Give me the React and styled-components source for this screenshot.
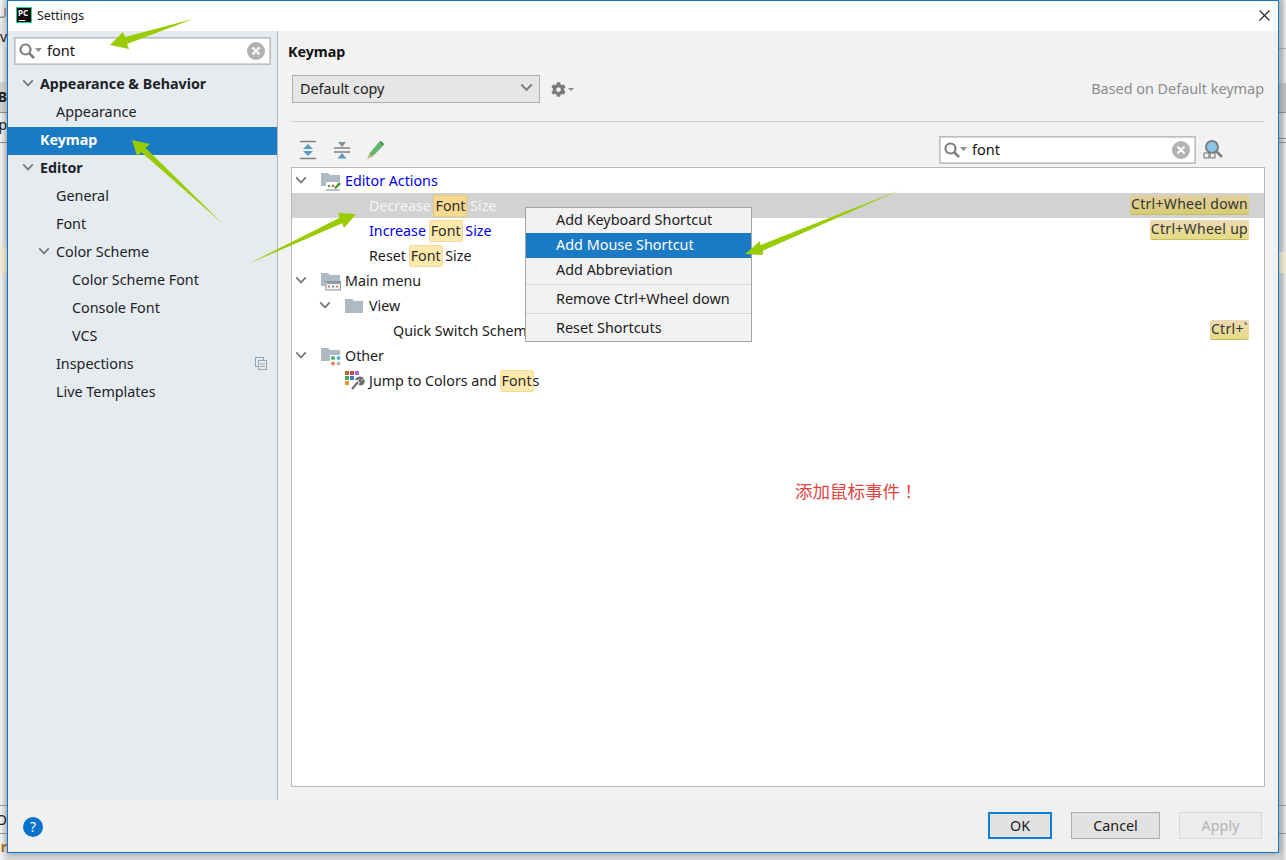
import React from 'react';
import styled, { createGlobalStyle, css } from 'styled-components';
import { FaCog } from 'react-icons/fa';

const FONT = '"Noto Sans", "Open Sans", sans-serif';

const GlobalStyle = createGlobalStyle`
  html, body {
    margin: 0;
    padding: 0;
    height: 100%;
    overflow: hidden;
    background: #e4e4e4;
  }
  * { box-sizing: border-box; }
`;

const Page = styled.div`
  position: relative;
  width: 1286px;
  height: 860px;
  padding-left: 7px;
  font-family: ${FONT};
  font-size: 14px;
  color: #1c1c1c;
  overflow: hidden;
  background: linear-gradient(to right, #f4f4f4 0, #d8d8d8 7px, #d8d8d8 1279px, #c8c8c8 1282px, #ececec 1286px);
`;

// things of the window behind the dialog, only their edges are visible
const BackBand = styled.div`
  position: absolute;
  left: ${p => (p.$right ? '1278px' : '0')};
  width: 8px;
  top: ${p => p.$top}px;
  height: ${p => p.$h}px;
  background: ${p => p.$bg};
`;

const BackText = styled.span`
  position: absolute;
  left: 0;
  width: 7px;
  overflow: hidden;
  top: ${p => p.$top}px;
  font-size: 14px;
  line-height: 18px;
  color: ${p => p.$color || '#222'};
  font-weight: ${p => (p.$bold ? 700 : 400)};
  direction: rtl;
`;

const Dialog = styled.div`
  position: relative;
  width: 1272px;
  height: 853px;
  display: flex;
  flex-direction: column;
  background: #f2f2f2;
  border: 1px solid #1674c4;
  box-shadow: 0 0 7px rgba(0, 0, 0, 0.35);
`;

const TitleBar = styled.div`
  height: 30px;
  flex: none;
  display: flex;
  align-items: center;
  padding: 0 0 2px 8px;
  background: #fff;
  font-size: 12.4px;
`;

const AppBadge = styled.div`
  width: 16px;
  height: 16px;
  margin-right: 5px;
  background: #0b0b0b;
  border: 1px solid #19d68c;
  color: #fff;
  font-size: 8px;
  font-weight: 700;
  line-height: 10px;
  padding-left: 1px;
  position: relative;
  &::after {
    content: '';
    position: absolute;
    left: 2px;
    bottom: 1px;
    width: 6px;
    height: 1px;
    background: #fff;
  }
`;

const CloseButton = styled.svg`
  width: 11px;
  height: 11px;
  margin-left: auto;
  margin-right: 8px;
`;

const Body = styled.div`
  flex: 1;
  min-height: 0;
  display: flex;
`;

const Sidebar = styled.div`
  width: 270px;
  flex: none;
  background: #e6ebf0;
  border-right: 1px solid #b4b4b4;
  padding-top: 6px;
`;

const SearchBox = styled.div`
  width: ${p => p.$w}px;
  height: 28px;
  flex: none;
  display: flex;
  align-items: center;
  background: #fff;
  border: 1px solid #bdbdbd;
  outline: 1px solid #d4d4d4;
  outline-offset: -2px;
  padding: 0 5px 1px 3px;
  margin-left: ${p => p.$ml || 0}px;
  font-size: 14.5px;
  color: #111;
`;

const SearchText = styled.span`
  margin-left: 4px;
  margin-top: -2px;
  flex: 1;
`;

const NavList = styled.div`
  margin-top: 6px;
`;

const NavRow = styled.div`
  height: 28px;
  display: flex;
  align-items: center;
  padding: 0 0 4px ${p => 8 + p.$depth * 16}px;
  font-size: ${p => (p.$bold ? 14.25 : 14.35)}px;
  font-weight: ${p => (p.$bold ? 700 : 400)};
  color: #1c2228;
  ${p => p.$selected && css`
    background: #1a7ac4;
    color: #fff;
  `}
`;

const ChevronSlot = styled.span`
  width: ${p => p.$w || 24}px;
  flex: none;
  display: flex;
  justify-content: center;
  align-items: center;
`;

const NavNote = styled.svg`
  width: 12px;
  height: 13px;
  margin-left: auto;
  margin-right: 10px;
`;

const Main = styled.div`
  flex: 1;
  min-width: 0;
  display: flex;
  flex-direction: column;
  padding: 10px 13px 13px;
`;

const Heading = styled.div`
  height: 22px;
  line-height: 22px;
  font-size: 14.25px;
  font-weight: 700;
  margin-left: -3px;
  color: #111;
`;

const SchemeRow = styled.div`
  margin-top: 12px;
  height: 28px;
  display: flex;
  align-items: center;
  padding-left: 1px;
`;

const SchemeSelect = styled.div`
  width: 248px;
  height: 28px;
  display: flex;
  align-items: center;
  justify-content: space-between;
  padding: 0 6px 2px 7px;
  background: #e6e6e6;
  border: 1px solid #adadad;
  font-size: 14.35px;
`;

const GearButton = styled.div`
  margin-left: 11px;
  display: flex;
  align-items: center;
  gap: 2px;
  color: #7a7a7a;
`;

const Caret = styled.span`
  width: 0;
  height: 0;
  border-left: 3px solid transparent;
  border-right: 3px solid transparent;
  border-top: 3px solid #8a8a8a;
`;

const BasedOn = styled.span`
  margin-left: auto;
  margin-right: 1px;
  padding-bottom: 2px;
  color: #8c8c8c;
  font-size: 14.4px;
`;

const Separator = styled.div`
  height: 1px;
  margin-top: 18px;
  background: #cfcfcf;
`;

const Toolbar = styled.div`
  margin-top: 14px;
  height: 28px;
  display: flex;
  align-items: center;
  gap: 10px;
  padding-left: 5px;
`;

const ToolIcon = styled.svg`
  width: 24px;
  height: 24px;
  flex: none;
  margin-left: ${p => p.$ml || 0}px;
`;

const ToolSearch = styled.div`
  margin-left: auto;
  margin-right: 69px;
  display: flex;
  align-items: center;
  position: relative;
`;

const Finder = styled.svg`
  position: absolute;
  left: 263px;
  top: 3px;
  width: 22px;
  height: 22px;
`;

const TreeBox = styled.div`
  margin-top: 3px;
  flex: 1;
  min-height: 0;
  background: #fff;
  border: 1px solid #b8b8b8;
`;

const TreeRow = styled.div`
  height: 25px;
  display: flex;
  align-items: center;
  padding-left: ${p => p.$depth * 24}px;
  font-size: 14.25px;
  white-space: nowrap;
  color: ${p => p.$color || '#1c1c1c'};
  background: ${p => (p.$active ? '#d2d2d2' : 'transparent')};
`;

const TreeChevron = styled.span`
  width: 29px;
  flex: none;
  display: flex;
  justify-content: center;
  padding-right: 11px;
`;

const TreeIcon = styled.span`
  width: 24px;
  height: 20px;
  flex: none;
  display: flex;
  align-items: center;
`;

const Match = styled.span`
  background: ${p => (p.$active ? '#f6d98f' : '#ffe9ad')};
  border: 1px solid ${p => (p.$active ? '#e8c878' : '#f2dc9e')};
  border-radius: 2px;
  color: #2c2c2c;
  line-height: 19px;
  padding: 0 1px 1px;
  margin: 0 -1px;
`;

const Shortcut = styled.span`
  margin-left: auto;
  margin-right: 15px;
  margin-top: -2px;
  height: 20px;
  line-height: 18px;
  padding: 0 1px;
  font-size: 14px;
  letter-spacing: 0.3px;
  color: #333;
  border-radius: 2px;
  border-bottom: 1px solid #c6bd60;
  background: linear-gradient(to bottom, ${p => (p.$active ? '#e2cfa2, #d6cd72' : '#eed9b4, #e4dc84')});
`;

const ContextMenu = styled.div`
  position: absolute;
  left: 517px;
  top: 206px;
  width: 227px;
  height: 135px;
  background: #f2f2f2;
  border: 1px solid #a3a3a3;
  font-size: 14.4px;
`;

const MenuItem = styled.div`
  height: 25px;
  line-height: 24px;
  padding-left: 30px;
  ${p => p.$selected && css`
    background: #1a7ac4;
    color: #fff;
  `}
`;

const MenuDivider = styled.div`
  height: 1px;
  margin: 1px 0 2px;
  background: #d4d4d4;
`;

const Footer = styled.div`
  height: 52px;
  flex: none;
  display: flex;
  align-items: flex-start;
  padding: 12px 16px 0 15px;
  background: #f0f0f0;
`;

const HelpButton = styled.div`
  width: 20px;
  height: 20px;
  margin-top: 5px;
  border-radius: 50%;
  background: #0a72cc;
  color: #fff;
  font-size: 14px;
  line-height: 20px;
  text-align: center;
  margin-right: auto;
`;

const Button = styled.div`
  width: ${p => p.$w}px;
  height: 27px;
  margin-left: ${p => p.$ml}px;
  display: flex;
  align-items: center;
  justify-content: center;
  font-size: 14.35px;
  background: #e2e2e2;
  border: 1px solid #adadad;
  ${p => p.$primary && css`
    border: 2px solid #0a7fdb;
  `}
  ${p => p.$disabled && css`
    background: #ececec;
    border-color: #d8d8d8;
    color: #b4b4b4;
  `}
`;

const Annotation = styled.span`
  position: absolute;
  left: 795px;
  top: 478px;
  font-family: "Noto Sans CJK TC", "Noto Sans CJK SC", sans-serif;
  font-size: 17.5px;
  line-height: 26px;
  color: #e2453f;
  white-space: nowrap;
`;

const ArrowLayer = styled.svg`
  position: absolute;
  left: 0;
  top: 0;
  width: 1286px;
  height: 860px;
  pointer-events: none;
`;

const Chevron = ({ size = 12 }) => (
  <svg width={size} height={size * 0.7} viewBox="0 0 12 8">
    <path d="M1.2 1.2 L6 6.2 L10.8 1.2" fill="none" stroke="#767b80" strokeWidth="1.8" />
  </svg>
);

const SearchGlass = () => (
  <svg width="25" height="18" viewBox="0 0 25 18">
    <circle cx="7.5" cy="7.5" r="5" fill="none" stroke="#7f7f7f" strokeWidth="2.2" />
    <path d="M11 11 L16 16" stroke="#7f7f7f" strokeWidth="2.6" />
    <path d="M17 6 H24 L20.5 10 Z" fill="#8f8f8f" />
  </svg>
);

const ClearIcon = () => (
  <svg width="18" height="18" viewBox="0 0 18 18">
    <circle cx="9" cy="9" r="9" fill="#b2b2b2" />
    <path d="M5.5 5.5 L12.5 12.5 M12.5 5.5 L5.5 12.5" stroke="#fff" strokeWidth="2.2" />
  </svg>
);

const Search = ({ w, ml }) => (
  <SearchBox $w={w} $ml={ml}>
    <SearchGlass />
    <SearchText>font</SearchText>
    <ClearIcon />
  </SearchBox>
);

const Folder = ({ children, small }) => (
  <svg width="20" height="20" viewBox="0 0 20 20">
    <path d={small ? 'M0 3 H7 L9 5 H18 V17 H0 Z' : 'M0 2 H7 L9 4 H19 V15 H0 Z'} fill="#aebbc4" />
    {children}
  </svg>
);

const ActionsDecor = () => (
  <>
    <path d="M5 11 H20 V20 H5 Z" fill="#fff" />
    <path d="M13 17 L18 11 L20 13 L15 18 Z" fill="#4a9a3c" />
    <circle cx="8" cy="15" r="1.3" fill="#4cae50" />
    <circle cx="12" cy="15" r="1.3" fill="#e0603c" />
    <path d="M5 19 H19" stroke="#7f8a90" strokeWidth="1" />
  </>
);

const MenuDecor = () => (
  <>
    <rect x="5" y="10.5" width="14.5" height="8.5" fill="#f4f4f4" stroke="#8a959c" />
    <path d="M6 11 H19 V13 H6 Z" fill="#8fa0aa" />
    <circle cx="8" cy="15.6" r="1.1" fill="#e0704c" />
    <circle cx="12" cy="15.6" r="1.1" fill="#4a90c8" />
    <circle cx="16" cy="15.6" r="1.1" fill="#e0704c" />
  </>
);

const OtherDecor = () => (
  <>
    <rect x="9" y="9" width="11" height="11" fill="#fff" />
    <circle cx="12" cy="12" r="2" fill="#4cae70" />
    <circle cx="17.5" cy="12" r="2" fill="#4ab8e0" />
    <circle cx="12" cy="17.5" r="2" fill="#e8805c" />
    <circle cx="17.5" cy="17.5" r="2" fill="#b4bcc2" />
  </>
);

const ColorsIcon = () => (
  <svg width="20" height="20" viewBox="0 0 20 20">
    <rect x="0" y="0" width="4" height="4" fill="#b8683c" />
    <rect x="5" y="0" width="4" height="4" fill="#d0483c" />
    <rect x="10" y="0" width="4" height="4" fill="#b868c8" />
    <rect x="0" y="5" width="4" height="4" fill="#4caa50" />
    <rect x="5" y="5" width="4" height="4" fill="#3c7cc8" />
    <rect x="0" y="10" width="4" height="4" fill="#d8a028" />
    <path d="M7 18 L13 11 M11 9 C12 7 15 6 17 7 L14.5 9.5 L16 11.5 L18.5 9.5 C19 12 17 14 14 13" fill="none" stroke="#6a6f73" strokeWidth="2.2" />
  </svg>
);

const ExpandIcon = () => (
  <ToolIcon viewBox="0 0 24 24">
    <path d="M4 3.5 H20 M4 20.5 H20" stroke="#808080" strokeWidth="1.6" />
    <path d="M12 6 L17 11 H7 Z M12 18 L17 13 H7 Z" fill="#5a9ac8" />
  </ToolIcon>
);

const CollapseIcon = () => (
  <ToolIcon viewBox="0 0 24 24">
    <path d="M4 10 H20 M4 14 H20" stroke="#808080" strokeWidth="1.6" />
    <path d="M12 9 L8 4 H16 Z" fill="#7f8f9a" />
    <path d="M12 15 L16.5 20.5 H7.5 Z" fill="#5a9ac8" />
  </ToolIcon>
);

const PencilIcon = () => (
  <ToolIcon viewBox="0 0 24 24" $ml={-1}>
    <path d="M6 16 L16 4 L20 8 L9 19 Z" fill="#62b86a" />
    <path d="M16 4 L20 8 L21 6 L18 3 Z" fill="#3f8a4a" />
    <path d="M6 16 L9 19 L4 21 Z" fill="#d8b080" />
  </ToolIcon>
);

const navItems = [
  { label: 'Appearance & Behavior', depth: 0, bold: true, open: true },
  { label: 'Appearance', depth: 1 },
  { label: 'Keymap', depth: 0, bold: true, selected: true },
  { label: 'Editor', depth: 0, bold: true, open: true },
  { label: 'General', depth: 1 },
  { label: 'Font', depth: 1 },
  { label: 'Color Scheme', depth: 1, open: true },
  { label: 'Color Scheme Font', depth: 2 },
  { label: 'Console Font', depth: 2 },
  { label: 'VCS', depth: 2 },
  { label: 'Inspections', depth: 1, note: true },
  { label: 'Live Templates', depth: 1 },
];

const arrows = [
  '193,19 127,44 129,49 110,45 123,32 125,37',
  '223,224 141.5,152.2 137,156 132,140 150,144 145.5,147.8',
  '248,264 342.3,223.2 344,228 356,214 338,213 339.7,217.8',
  '900,190 762.7,250.8 763,255 745,254 760,241 760.3,245.2',
];

const App = () => (
  <Page>
    <GlobalStyle />
    <BackBand $top={22} $h={25} $bg="#e6e6e6" />
    <BackBand $top={82} $h={30} $bg="#d2d2d2" />
    <BackBand $top={112} $h={1} $bg="#8f8f8f" />
    <BackBand $top={142} $h={1} $bg="#8f8f8f" />
    <BackBand $top={247} $h={26} $bg="#f2ebd8" />
    <BackBand $top={805} $h={1} $bg="#9a9a9a" />
    <BackBand $top={833} $h={1} $bg="#9a9a9a" />
    <BackBand $right $top={48} $h={1} $bg="#a8a8a8" />
    <BackBand $right $top={83} $h={29} $bg="#bdbdbd" />
    <BackBand $right $top={112} $h={1} $bg="#8f8f8f" />
    <BackBand $right $top={138} $h={1} $bg="#8f8f8f" />
    <BackBand $right $top={142} $h={1} $bg="#8f8f8f" />
    <BackBand $right $top={252} $h={21} $bg="#efe8d2" />
    <BackBand $right $top={805} $h={1} $bg="#9a9a9a" />
    <BackBand $right $top={833} $h={1} $bg="#9a9a9a" />
    <BackText $top={4} $color="#888">U</BackText>
    <BackText $top={28}>ev</BackText>
    <BackText $top={88} $bold>B</BackText>
    <BackText $top={116}>op</BackText>
    <BackText $top={811}>O</BackText>
    <BackText $top={838} $color="#b87010" $bold>ir</BackText>

    <Dialog>
      <TitleBar>
        <AppBadge>PC</AppBadge>
        Settings
        <CloseButton viewBox="0 0 11 11">
          <path d="M0.5 0.5 L10.5 10.5 M10.5 0.5 L0.5 10.5" stroke="#222" strokeWidth="1.1" />
        </CloseButton>
      </TitleBar>

      <Body>
        <Sidebar>
          <Search w={257} ml={6} />
          <NavList>
            {navItems.map(item => (
              <NavRow key={item.label} $depth={item.depth} $bold={item.bold} $selected={item.selected}>
                <ChevronSlot>{item.open && <Chevron />}</ChevronSlot>
                {item.label}
                {item.note && (
                  <NavNote viewBox="0 0 12 13">
                    <rect x="0.5" y="0.5" width="8" height="9" fill="none" stroke="#7fa8c8" />
                    <rect x="3.5" y="3.5" width="8" height="9" fill="#e6ebf0" stroke="#9aa4ac" />
                    <path d="M5 7 H10 M5 9.5 H10" stroke="#9aa4ac" />
                  </NavNote>
                )}
              </NavRow>
            ))}
          </NavList>
        </Sidebar>

        <Main>
          <Heading>Keymap</Heading>
          <SchemeRow>
            <SchemeSelect>
              Default copy
              <Chevron size={13} />
            </SchemeSelect>
            <GearButton>
              <FaCog size={15} />
              <Caret />
            </GearButton>
            <BasedOn>Based on Default keymap</BasedOn>
          </SchemeRow>
          <Separator />
          <Toolbar>
            <ExpandIcon />
            <CollapseIcon />
            <PencilIcon />
            <ToolSearch>
              <Search w={257} />
              <Finder viewBox="0 0 22 22">
                <circle cx="10" cy="8" r="6" fill="#8cc4e8" stroke="#7f7f7f" strokeWidth="2" />
                <path d="M14 12 L20 18" stroke="#7f7f7f" strokeWidth="2.6" />
                <path d="M2 14 H7 V19 H2 Z M8 14 H13 V19 H8 Z" fill="#f2f2f2" stroke="#6f6f6f" />
              </Finder>
            </ToolSearch>
          </Toolbar>

          <TreeBox>
            <TreeRow $depth={0} $color="#0000f0">
              <TreeChevron><Chevron /></TreeChevron>
              <TreeIcon><Folder><ActionsDecor /></Folder></TreeIcon>
              Editor Actions
            </TreeRow>
            <TreeRow $depth={1} $active $color="#f6f6f6">
              <TreeChevron />
              <TreeIcon />
              Decrease&nbsp;<Match $active>Font</Match>&nbsp;Size
              <Shortcut $active>Ctrl+Wheel down</Shortcut>
            </TreeRow>
            <TreeRow $depth={1} $color="#0000f0">
              <TreeChevron />
              <TreeIcon />
              Increase&nbsp;<Match>Font</Match>&nbsp;Size
              <Shortcut>Ctrl+Wheel up</Shortcut>
            </TreeRow>
            <TreeRow $depth={1}>
              <TreeChevron />
              <TreeIcon />
              Reset&nbsp;<Match>Font</Match>&nbsp;Size
            </TreeRow>
            <TreeRow $depth={0}>
              <TreeChevron><Chevron /></TreeChevron>
              <TreeIcon><Folder><MenuDecor /></Folder></TreeIcon>
              Main menu
            </TreeRow>
            <TreeRow $depth={1}>
              <TreeChevron><Chevron /></TreeChevron>
              <TreeIcon><Folder small /></TreeIcon>
              View
            </TreeRow>
            <TreeRow $depth={2}>
              <TreeChevron />
              <TreeIcon />
              Quick Switch Scheme...
              <Shortcut>Ctrl+`</Shortcut>
            </TreeRow>
            <TreeRow $depth={0}>
              <TreeChevron><Chevron /></TreeChevron>
              <TreeIcon><Folder><OtherDecor /></Folder></TreeIcon>
              Other
            </TreeRow>
            <TreeRow $depth={1}>
              <TreeChevron />
              <TreeIcon><ColorsIcon /></TreeIcon>
              Jump to Colors and&nbsp;<Match>Font</Match>s
            </TreeRow>
          </TreeBox>
        </Main>
      </Body>

      <Footer>
        <HelpButton>?</HelpButton>
        <Button $w={64} $ml={0} $primary>OK</Button>
        <Button $w={89} $ml={19}>Cancel</Button>
        <Button $w={83} $ml={19} $disabled>Apply</Button>
      </Footer>

      <ContextMenu>
        <MenuItem>Add Keyboard Shortcut</MenuItem>
        <MenuItem $selected>Add Mouse Shortcut</MenuItem>
        <MenuItem>Add Abbreviation</MenuItem>
        <MenuDivider />
        <MenuItem>Remove Ctrl+Wheel down</MenuItem>
        <MenuDivider />
        <MenuItem>Reset Shortcuts</MenuItem>
      </ContextMenu>
    </Dialog>

    <Annotation>添加鼠标事件！</Annotation>

    <ArrowLayer viewBox="0 0 1286 860">
      {arrows.map(points => (
        <polygon key={points} points={points} fill="#99cc00" />
      ))}
    </ArrowLayer>
  </Page>
);

export default App;
